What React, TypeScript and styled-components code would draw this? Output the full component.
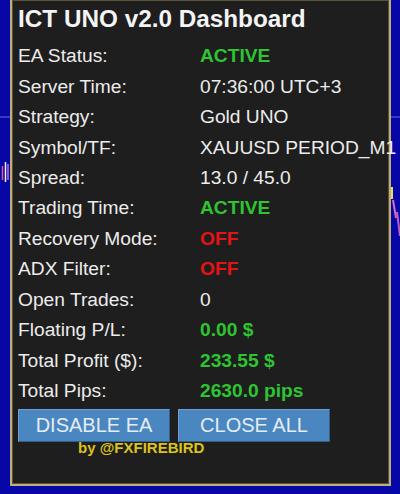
import React from 'react';
import styled, { createGlobalStyle } from 'styled-components';

const GlobalStyle = createGlobalStyle`
  html, body {
    margin: 0;
    padding: 0;
    background: #0707a8;
  }
  * {
    box-sizing: border-box;
  }
`;

const Page = styled.div`
  position: relative;
  width: 400px;
  height: 494px;
  overflow: hidden;
  background: #0707a8;
  font-family: "Liberation Sans", Arial, sans-serif;
`;

const ChartLayer = styled.svg`
  position: absolute;
  left: 0;
  top: 0;
  width: 400px;
  height: 494px;
`;

const Panel = styled.div`
  position: relative;
  z-index: 1;
  margin-left: 10px;
  width: 381px;
  height: 486px;
  background: #1e1e1e;
  border: 2px solid #bfae78;
  border-top: none;
  padding: 4px 0 0 6px;
  box-shadow: inset 0 0 0 1px #5a5234;
`;

const Title = styled.div`
  height: 30px;
  line-height: 30px;
  font-size: 24.3px;
  font-weight: 700;
  color: #f4f4f4;
  white-space: nowrap;
`;

const Rows = styled.div`
  margin-top: 7px;
  display: grid;
  grid-template-columns: 182px 1fr;
  grid-auto-rows: 30.45px;
  align-items: center;
`;

const Label = styled.div`
  font-size: 19.2px;
  color: #ececec;
  white-space: nowrap;
`;

type Tone = 'plain' | 'green' | 'red';

const toneColor: Record<Tone, string> = {
  plain: '#ececec',
  green: '#2ec432',
  red: '#e41414',
};

const Value = styled.div<{ $tone: Tone }>`
  font-size: 19.2px;
  font-weight: ${({ $tone }) => ($tone === 'plain' ? 400 : 700)};
  color: ${({ $tone }) => toneColor[$tone]};
  white-space: nowrap;
  overflow: visible;
`;

const ButtonRow = styled.div`
  margin-top: 3px;
  display: flex;
  gap: 8px;
`;

const ActionButton = styled.button`
  width: 152px;
  height: 33px;
  padding: 0;
  background: #4a86bf;
  border: 1px solid #2f5f8f;
  border-top-color: #6e9fd0;
  border-left-color: #6e9fd0;
  color: #e4ecf5;
  font-family: "Liberation Sans", Arial, sans-serif;
  font-size: 20px;
  line-height: 31px;
  cursor: pointer;
`;

const Credit = styled.div`
  position: relative;
  z-index: 2;
  margin: -3px 0 0 60px;
  font-size: 15px;
  line-height: 17px;
  font-weight: 700;
  color: #dcc21a;
  white-space: nowrap;
`;

const rows: { label: string; value: string; tone: Tone }[] = [
  { label: 'EA Status:', value: 'ACTIVE', tone: 'green' },
  { label: 'Server Time:', value: '07:36:00 UTC+3', tone: 'plain' },
  { label: 'Strategy:', value: 'Gold UNO', tone: 'plain' },
  { label: 'Symbol/TF:', value: 'XAUUSD PERIOD_M1', tone: 'plain' },
  { label: 'Spread:', value: '13.0 / 45.0', tone: 'plain' },
  { label: 'Trading Time:', value: 'ACTIVE', tone: 'green' },
  { label: 'Recovery Mode:', value: 'OFF', tone: 'red' },
  { label: 'ADX Filter:', value: 'OFF', tone: 'red' },
  { label: 'Open Trades:', value: '0', tone: 'plain' },
  { label: 'Floating P/L:', value: '0.00 $', tone: 'green' },
  { label: 'Total Profit ($):', value: '233.55 $', tone: 'green' },
  { label: 'Total Pips:', value: '2630.0 pips', tone: 'green' },
];

const App: React.FC = () => {
  return (
    <>
      <GlobalStyle />
      <Page>
        <ChartLayer viewBox="0 0 400 494">
          <line x1="0" y1="117" x2="400" y2="117" stroke="#6a6ad8" strokeWidth="1" />
          <line x1="2.5" y1="166" x2="2.5" y2="180" stroke="#e05a8a" strokeWidth="1.5" />
          <line x1="5.5" y1="162" x2="5.5" y2="182" stroke="#f0f0ff" strokeWidth="1.5" />
          <line x1="8" y1="164" x2="8" y2="180" stroke="#c070d0" strokeWidth="1.5" />
          <rect x="389" y="187" width="4" height="12" fill="#e8d870" />
          <line x1="393" y1="200" x2="396" y2="218" stroke="#d070c0" strokeWidth="2" />
          <line x1="397" y1="212" x2="400" y2="236" stroke="#c060c0" strokeWidth="2" />
        </ChartLayer>
        <Panel>
          <Title>ICT UNO v2.0 Dashboard</Title>
          <Rows>
            {rows.map((r) => (
              <React.Fragment key={r.label}>
                <Label>{r.label}</Label>
                <Value $tone={r.tone}>{r.value}</Value>
              </React.Fragment>
            ))}
          </Rows>
          <ButtonRow>
            <ActionButton>DISABLE EA</ActionButton>
            <ActionButton>CLOSE ALL</ActionButton>
          </ButtonRow>
          <Credit>by @FXFIREBIRD</Credit>
        </Panel>
      </Page>
    </>
  );
};

export default App;
